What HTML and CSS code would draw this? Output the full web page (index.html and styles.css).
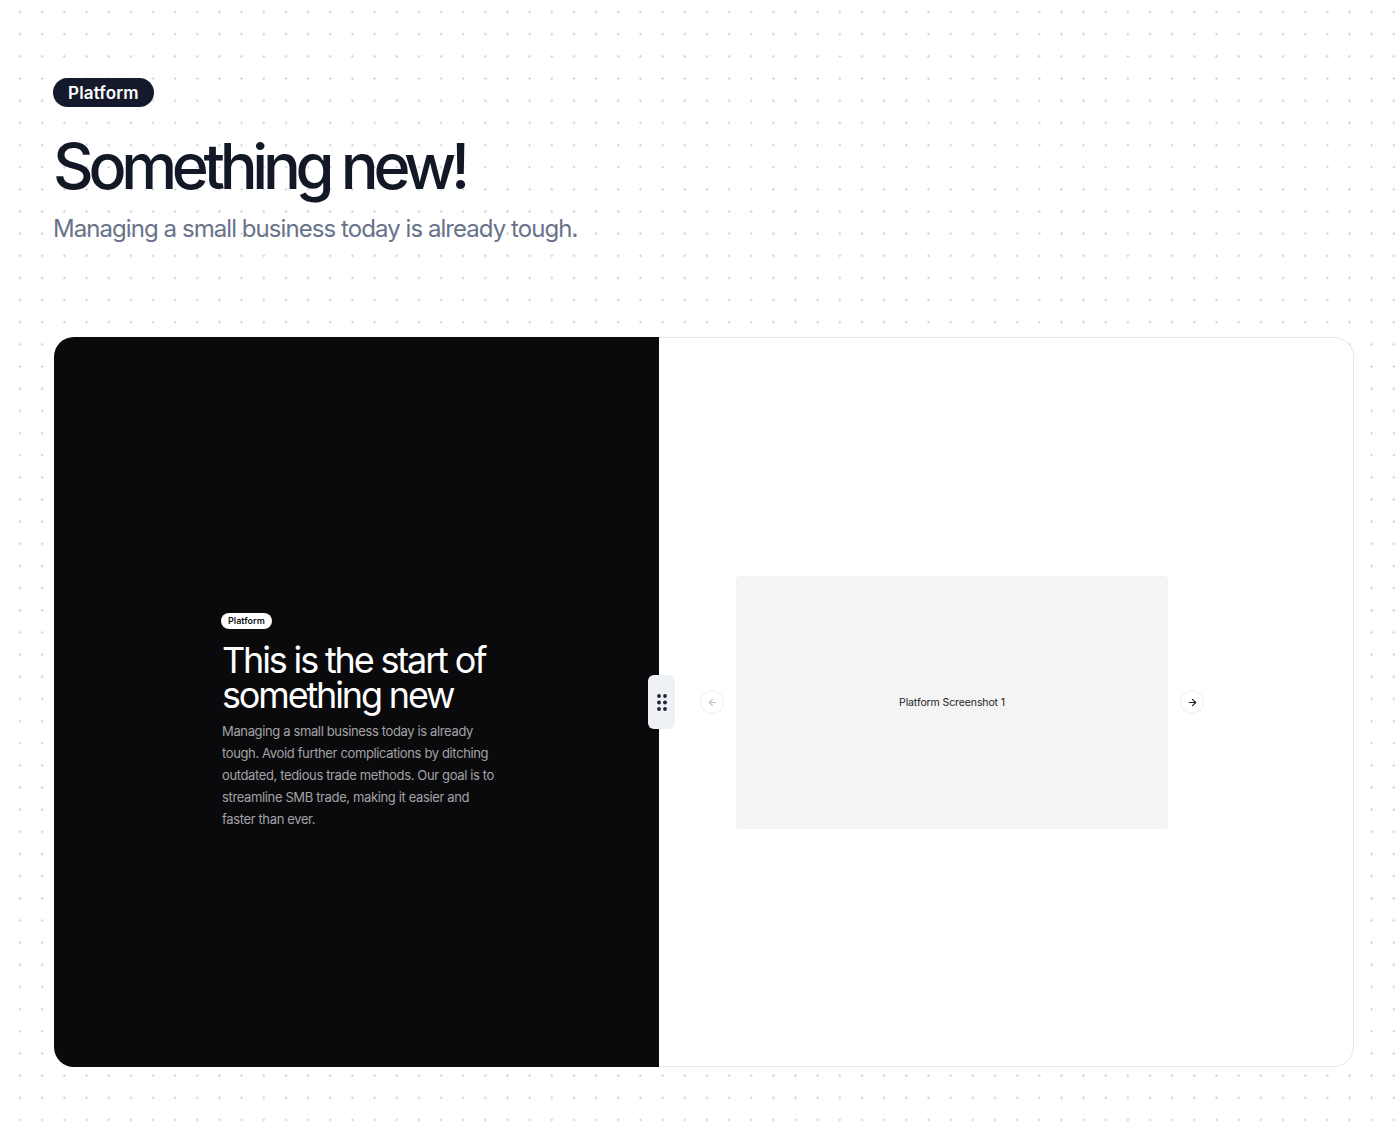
FILE: index.html
```html
<!DOCTYPE html>
<html lang="en">
<head>
    <meta charset="UTF-8">
    <meta name="viewport" content="width=device-width, initial-scale=1.0">
    <title>Something new!</title>
    <link rel="stylesheet" href="styles.css">
</head>
<body>
    <div class="page">
        <header class="intro">
            <span class="tag">Platform</span>
            <h1>Something new!</h1>
            <p class="lead">Managing a small business today is already tough.</p>
        </header>

        <!-- compare card: dark story panel + screenshot carousel -->
        <section class="showcase">
            <div class="story">
                <div class="story-inner">
                    <span class="tag tag-small">Platform</span>
                    <h2>This is the start of something new</h2>
                    <p>Managing a small business today is already tough. Avoid further complications by ditching outdated, tedious trade methods. Our goal is to streamline SMB trade, making it easier and faster than ever.</p>
                </div>
            </div>

            <div class="gallery">
                <div class="carousel">
                    <button class="nav-btn nav-disabled" aria-label="Previous">
                        <svg width="11" height="11" viewBox="0 0 24 24" fill="none" stroke="currentColor" stroke-width="2.5" stroke-linecap="round" stroke-linejoin="round"><path d="M19 12H5"/><path d="M12 19l-7-7 7-7"/></svg>
                    </button>
                    <div class="shot">Platform Screenshot 1</div>
                    <button class="nav-btn" aria-label="Next">
                        <svg width="11" height="11" viewBox="0 0 24 24" fill="none" stroke="currentColor" stroke-width="2.5" stroke-linecap="round" stroke-linejoin="round"><path d="M5 12h14"/><path d="M12 5l7 7-7 7"/></svg>
                    </button>
                </div>
            </div>

            <div class="handle">
                <svg width="12" height="19" viewBox="0 0 12 19" fill="#1f2430"><circle cx="3" cy="3" r="1.9"/><circle cx="9" cy="3" r="1.9"/><circle cx="3" cy="9.5" r="1.9"/><circle cx="9" cy="9.5" r="1.9"/><circle cx="3" cy="16" r="1.9"/><circle cx="9" cy="16" r="1.9"/></svg>
            </div>
        </section>
    </div>
</body>
</html>
```

FILE: styles.css
```css
/* page + dotted background */
body {
    margin: 0;
    font-family: Inter, "Noto Sans", Arial, sans-serif;
    color: #121826;
    background-color: #fff;
    background-image: radial-gradient(circle, #d3d6dc 1px, transparent 1.4px);
    background-size: 22.17px 22.17px;
    background-position: 9px 1px;
    min-height: 1136px;
}

.page {
    padding: 78px 46px 0 54px;
}

.intro {
    display: flex;
    flex-direction: column;
    align-items: flex-start;
}

.tag {
    display: inline-flex;
    align-items: center;
    height: 29px;
    padding: 0 15px;
    margin-left: -1px;
    border-radius: 999px;
    background-color: #141a2b;
    color: #fff;
    font-size: 17px;
    font-weight: 600;
    letter-spacing: 0.01em;
}

h1 {
    margin: 28px 0 0 -1px;
    font-size: 63px;
    line-height: 1;
    font-weight: 500;
    letter-spacing: -0.084em;
    color: #121826;
}

.lead {
    margin: 15px 0 0 -1px;
    font-size: 24px;
    line-height: 32px;
    letter-spacing: -0.039em;
    color: #687389;
}

/* showcase card */
.showcase {
    position: relative;
    display: flex;
    height: 728px;
    margin-top: 92px;
    border: 1px solid #e8e8ea;
    border-radius: 20px;
    background-color: #fff;
}

.story {
    width: 605px;
    margin: -1px 0 -1px -1px;
    background-color: #0a0a0d;
    border-radius: 20px 0 0 20px;
    color: #fff;
}

.story-inner {
    width: 281px;
    padding: 271px 0 0 168px;
}

.tag-small {
    height: 16px;
    padding: 0 7px;
    margin-left: -1px;
    background-color: #fff;
    color: #111;
    font-size: 9px;
    letter-spacing: 0;
}

.story h2 {
    margin: 14px 0 0;
    font-size: 36px;
    line-height: 35px;
    font-weight: 400;
    letter-spacing: -0.06em;
}

.story p {
    margin: 7px 0 0;
    font-size: 13px;
    line-height: 22px;
    letter-spacing: -0.028em;
    color: #a3a3a6;
}

.gallery {
    flex: 1;
    display: flex;
    align-items: center;
    padding-left: 41px;
}

.carousel {
    display: flex;
    align-items: center;
    gap: 12px;
}

.nav-btn {
    display: flex;
    align-items: center;
    justify-content: center;
    width: 24px;
    height: 24px;
    padding: 0;
    border: 1px solid #ededed;
    border-radius: 50%;
    background-color: #fff;
    color: #222;
    cursor: pointer;
}

.nav-disabled {
    color: #c4c4c4;
}

.shot {
    display: flex;
    align-items: center;
    justify-content: center;
    width: 432px;
    height: 253px;
    border-radius: 4px;
    background-color: #f4f4f4;
    font-size: 10.5px;
    letter-spacing: -0.01em;
    color: #1e1e1e;
}

/* slider grip sits over the seam */
.handle {
    position: absolute;
    left: 593px;
    top: 337px;
    display: flex;
    align-items: center;
    justify-content: center;
    width: 27px;
    height: 54px;
    border-radius: 6px;
    background-color: #eef1f6;
}
```
